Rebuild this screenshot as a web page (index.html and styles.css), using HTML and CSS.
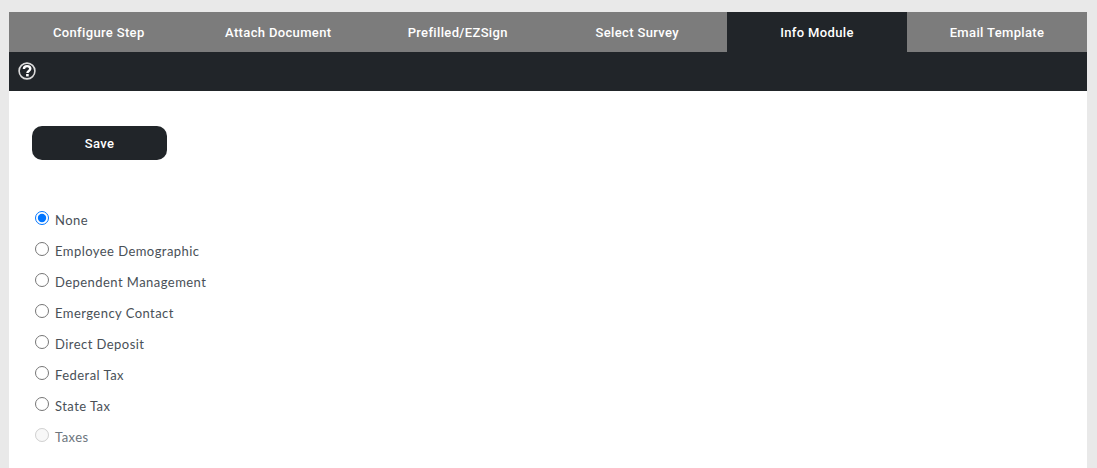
FILE: index.html
```html
<!DOCTYPE html>
<html lang="en">
<head>
    <meta charset="UTF-8">
    <meta name="viewport" content="width=device-width, initial-scale=1.0">
    <title>Info Module</title>
    <link rel="stylesheet" href="styles.css">
</head>
<body>
    <div class="panel">
        <div class="tabs">
            <a class="tab">Configure Step</a>
            <a class="tab">Attach Document</a>
            <a class="tab">Prefilled/EZSign</a>
            <a class="tab">Select Survey</a>
            <a class="tab active">Info Module</a>
            <a class="tab">Email Template</a>
        </div>
        <div class="toolbar">
            <svg class="help" width="18" height="18" viewBox="0 0 18 18" aria-hidden="true">
                <circle cx="9" cy="9" r="7.9" fill="none" stroke="#dcdcdc" stroke-width="1.6"/>
                <path d="M5.9 7.1 C5.9 5.2 7.3 4.1 9.1 4.1 C10.9 4.1 12.3 5.2 12.3 6.8 C12.3 8.9 9.4 8.9 9.4 10.9" fill="none" stroke="#fff" stroke-width="2.4"/>
                <rect x="8.1" y="12" width="2.6" height="2.4" fill="#fff"/>
            </svg>
        </div>
        <div class="content">
            <button class="save" type="button">Save</button>
            <div class="options">
                <label class="option"><input type="radio" name="module" checked><span>None</span></label>
                <label class="option"><input type="radio" name="module"><span>Employee Demographic</span></label>
                <label class="option"><input type="radio" name="module"><span>Dependent Management</span></label>
                <label class="option"><input type="radio" name="module"><span>Emergency Contact</span></label>
                <label class="option"><input type="radio" name="module"><span>Direct Deposit</span></label>
                <label class="option"><input type="radio" name="module"><span>Federal Tax</span></label>
                <label class="option"><input type="radio" name="module"><span>State Tax</span></label>
                <label class="option disabled"><input type="radio" name="module" disabled><span>Taxes</span></label>
            </div>
        </div>
    </div>
</body>
</html>
```

FILE: styles.css
```css
html, body {
    height: 100%;
}
body {
    margin: 0;
    padding: 12px 10px 0 9px;
    box-sizing: border-box;
    overflow: hidden;
    background-color: #e9e9e9;
    font-family: "Lato", "Liberation Sans", sans-serif;
}
.panel {
    background-color: #fff;
    height: 100%;
}
.tabs {
    display: grid;
    grid-template-columns: repeat(4, 179.5px) 180px 1fr;
    height: 40px;
    background-color: #7c7c7c;
}
.tab {
    display: flex;
    align-items: center;
    justify-content: center;
    color: #fff;
    font-family: "Roboto", sans-serif;
    font-size: 13px;
    font-weight: 500;
    letter-spacing: 0.35px;
}
.tab.active {
    background-color: #212529;
}
.toolbar {
    display: flex;
    align-items: center;
    height: 39px;
    padding: 0 0 2px 9px;
    box-sizing: border-box;
    background-color: #212529;
}
.content {
    padding: 35px 23px 0;
}
.save {
    display: block;
    width: 135px;
    height: 34px;
    border: 0;
    border-radius: 10px;
    background-color: #212529;
    color: #fff;
    font-family: "Roboto", sans-serif;
    font-size: 13px;
    font-weight: 500;
    letter-spacing: 0.35px;
}
.options {
    display: flex;
    flex-direction: column;
    gap: 11px;
    margin-top: 50px;
    padding-left: 3px;
}
.option {
    display: flex;
    height: 20px;
    align-items: flex-start;
    color: #495057;
    font-size: 13px;
    letter-spacing: 0.45px;
}
.option input {
    width: 14px;
    height: 14px;
    margin: 1px 6px 0 0;
}
.option span {
    padding-top: 2px;
}
.option.disabled {
    color: #6c757d;
}
```
